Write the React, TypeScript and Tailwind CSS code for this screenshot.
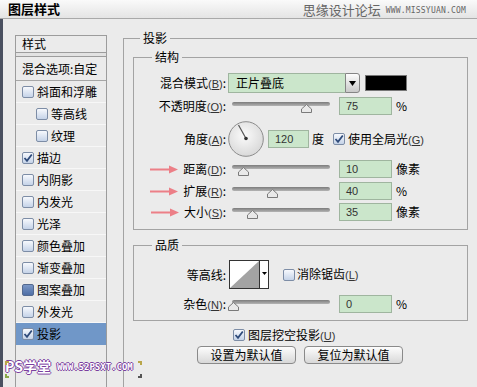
import React from 'react';

const Check = ({ checked, dark }: { checked?: boolean; dark?: boolean }) => (
  <span
    className={
      dark
        ? 'w-[12px] h-[12px] rounded-[2px] border border-[#53698f] bg-linear-to-b from-[#7b98c8] to-[#4e6ea5] flex items-center justify-center shrink-0'
        : 'w-[12px] h-[12px] rounded-[2px] border border-[#7d8da6] bg-linear-to-b from-[#f7f9fd] to-[#c5d3e8] flex items-center justify-center shrink-0'
    }
  >
    {checked && (
      <svg width="10" height="10" viewBox="0 0 10 10">
        <path d="M1.5 5 L4 7.8 L8.8 1.5" fill="none" stroke="#2f4b7a" strokeWidth="1.8" />
      </svg>
    )}
  </span>
);

const Key = ({ k }: { k: string }) => (
  <span className="font-['Liberation_Sans',sans-serif] text-[11px] text-[#333]">
    (<u>{k}</u>)
  </span>
);

const Slider = ({ pos }: { pos: number }) => (
  <div className="relative w-[98px] h-[18px] ml-[6px] shrink-0">
    <div className="absolute left-0 right-0 top-[5px] h-[4px] rounded-full bg-linear-to-b from-[#7c7c7c] to-[#b4b4b4]" />
    <svg className="absolute top-[7px]" style={{ left: pos - 5 }} width="11" height="9" viewBox="0 0 11 9">
      <path d="M5.5 0.5 L10.5 5 L10.5 8.5 L0.5 8.5 L0.5 5 Z" fill="#e9e9e9" stroke="#7a7a7a" />
    </svg>
  </div>
);

const Field = ({ v, w = 'w-[53px]' }: { v: string; w?: string }) => (
  <div
    className={`${w} h-[18px] shrink-0 bg-[#cbe6cb] border border-[#9fb59f] pl-[6px] flex items-center font-['Liberation_Sans',sans-serif] text-[11px] text-[#333]`}
  >
    {v}
  </div>
);

const Arrow = () => (
  <svg width="28" height="9" viewBox="0 0 28 9" className="shrink-0">
    <line x1="0" y1="4.5" x2="21" y2="4.5" stroke="#ec7f87" strokeWidth="2" />
    <polygon points="19,0.5 28,4.5 19,8.5" fill="#ec7f87" />
  </svg>
);

const Label = ({ children, arrow }: { children: React.ReactNode; arrow?: boolean }) => (
  <div className="w-[92px] shrink-0 flex items-center justify-end gap-[5px] text-[12px]">
    {arrow && <Arrow />}
    <span>{children}</span>
  </div>
);

const SliderRow = ({
  label,
  k,
  pos,
  v,
  unit,
  arrow,
  mt,
}: {
  label: string;
  k: string;
  pos: number;
  v: string;
  unit: string;
  arrow?: boolean;
  mt: string;
}) => (
  <div className={`${mt} h-[18px] flex items-center`}>
    <Label arrow={arrow}>
      {label}
      <Key k={k} />:
    </Label>
    <Slider pos={pos} />
    <div className="ml-[9px]">
      <Field v={v} />
    </div>
    <span className="ml-[4px] text-[12px]">{unit}</span>
  </div>
);

const styles = [
  { t: '斜面和浮雕' },
  { t: '等高线', indent: true },
  { t: '纹理', indent: true },
  { t: '描边', checked: true },
  { t: '内阴影' },
  { t: '内发光' },
  { t: '光泽' },
  { t: '颜色叠加' },
  { t: '渐变叠加' },
  { t: '图案叠加', dark: true },
  { t: '外发光' },
  { t: '投影', checked: true, selected: true },
];

export default function App() {
  return (
    <div className="relative w-[477px] h-[387px] overflow-hidden bg-[#ebebeb] flex flex-col text-black font-['Noto_Sans_CJK_SC',sans-serif] text-[12px]">
      {/* title bar */}
      <div className="h-[19px] shrink-0 flex items-end bg-linear-to-b from-[#fafafa] to-[#e4e4e4] border-b border-[#a9a9a9]">
        <span className="ml-[8px] mb-[1px] text-[13px] leading-[17px] font-bold">图层样式</span>
        <div className="ml-auto mr-[11px] flex items-end gap-[5px] text-[#666]">
          <span className="text-[13px] leading-[17px]">思缘设计论坛</span>
          <span className="mb-[2px] font-['DejaVu_Sans_Mono',monospace] text-[8px] leading-[10px] tracking-[0.2px]">WWW.MISSYUAN.COM</span>
        </div>
      </div>

      <div className="flex-1 flex min-h-0">
        <div className="w-[3px] shrink-0 bg-[#4a5060]" />

        {/* style list */}
        <div className="ml-[12px] mt-[16px] w-[92px] h-[360px] shrink-0 border border-[#9c9c9c] flex flex-col">
          <div className="h-[17px] pl-[6px] flex items-center border-b border-[#9c9c9c]">样式</div>
          <div className="h-[4px] border-b border-[#9c9c9c] bg-[#e2e2e2]" />
          <div className="h-[24px] pl-[6px] flex items-center border-b border-[#a6a6a6]">混合选项:自定</div>
          {styles.map((s) => (
            <div
              key={s.t}
              className={`h-[22px] flex items-center gap-[3px] border-b ${s.indent ? 'pl-[20px]' : 'pl-[6px]'} ${
                s.selected ? 'bg-[#7097c8] border-[#7097c8]' : 'border-[#f7f7f7]'
              }`}
            >
              <Check checked={s.checked} dark={s.dark} />
              <span>{s.t}</span>
            </div>
          ))}
        </div>

        {/* drop shadow panel */}
        <fieldset className="ml-[16px] mt-[11px] w-[360px] h-[400px] shrink-0 border-l border-t border-[#a3a3a3]">
          <legend className="ml-[16px] px-[3px] leading-[16px]">投影</legend>

          <fieldset className="ml-[9px] mt-[3px] w-[335px] border border-[#a3a3a3] pb-[8px]">
            <legend className="ml-[18px] px-[3px] leading-[16px]">结构</legend>

            <div className="mt-[8px] h-[20px] flex items-center">
              <Label>
                混合模式<Key k="B" />:
              </Label>
              <div className="ml-[2px] w-[132px] h-[20px] flex">
                <div className="flex-1 bg-[#cbe6cb] border border-[#9fb59f] border-r-0 pl-[7px] flex items-center">正片叠底</div>
                <div className="w-[15px] rounded-r-[3px] border border-[#858585] bg-linear-to-b from-[#fdfdfd] to-[#c9c9c9] flex items-center justify-center">
                  <svg width="7" height="5" viewBox="0 0 7 5">
                    <polygon points="0,0 7,0 3.5,5" fill="#000" />
                  </svg>
                </div>
              </div>
              <div className="ml-[5px] w-[42px] h-[16px] bg-black border border-[#777]" />
            </div>

            <SliderRow mt="mt-[4px]" label="不透明度" k="O" pos={74} v="75" unit="%" />

            <div className="mt-[6px] h-[36px] flex items-center">
              <Label>
                角度<Key k="A" />:
              </Label>
              <svg className="ml-[2px] shrink-0" width="36" height="36" viewBox="0 0 36 36">
                <defs>
                  <radialGradient id="dial" cx="0.45" cy="0.4" r="0.65">
                    <stop offset="0" stopColor="#fbfbfb" />
                    <stop offset="1" stopColor="#d6d6d6" />
                  </radialGradient>
                </defs>
                <circle cx="18" cy="18" r="17.3" fill="url(#dial)" stroke="#8c8c8c" />
                <line x1="18" y1="17.5" x2="10.5" y2="4" stroke="#555" strokeWidth="1.2" />
                <circle cx="18" cy="17.5" r="1.8" fill="#333" />
              </svg>
              <div className="ml-[4px]">
                <Field v="120" w="w-[41px]" />
              </div>
              <span className="ml-[3px]">度</span>
              <div className="ml-[9px]">
                <Check checked />
              </div>
              <span className="ml-[3px]">
                使用全局光<Key k="G" />
              </span>
            </div>

            <SliderRow mt="mt-[3px]" label="距离" k="D" pos={11} v="10" unit="像素" arrow />
            <SliderRow mt="mt-[4px]" label="扩展" k="R" pos={40} v="40" unit="%" arrow />
            <SliderRow mt="mt-[3px]" label="大小" k="S" pos={20} v="35" unit="像素" arrow />
          </fieldset>

          <fieldset className="ml-[9px] mt-[7px] w-[335px] border border-[#a3a3a3] pb-[7px]">
            <legend className="ml-[18px] px-[3px] leading-[16px]">品质</legend>

            <div className="mt-[7px] h-[29px] flex items-center">
              <Label>等高线:</Label>
              <div className="ml-[3px] w-[40px] h-[29px] shrink-0 flex border border-[#333] bg-white">
                <svg width="29" height="27" viewBox="0 0 29 27">
                  <polygon points="0,27 29,0 29,27" fill="#a3a3a3" />
                </svg>
                <div className="flex-1 border-l border-[#333] flex justify-center pt-[11px]">
                  <svg width="5" height="3" viewBox="0 0 5 3">
                    <polygon points="0,0 5,0 2.5,3" fill="#000" />
                  </svg>
                </div>
              </div>
              <div className="ml-[14px]">
                <Check />
              </div>
              <span className="ml-[2px]">
                消除锯齿<Key k="L" />
              </span>
            </div>

            <SliderRow mt="mt-[6px]" label="杂色" k="N" pos={1} v="0" unit="%" />
          </fieldset>

          <div className="mt-[7px] ml-[109px] h-[14px] flex items-center gap-[3px]">
            <Check checked />
            <span>
              图层挖空投影<Key k="U" />
            </span>
          </div>

          <div className="mt-[4px] ml-[73px] flex gap-[8px]">
            <button className="w-[99px] h-[18px] rounded-[4px] border border-[#8a8a8a] bg-linear-to-b from-[#fdfdfd] to-[#d8d8d8] text-[12px] leading-[16px]">
              设置为默认值
            </button>
            <button className="w-[99px] h-[18px] rounded-[4px] border border-[#8a8a8a] bg-linear-to-b from-[#fdfdfd] to-[#d8d8d8] text-[12px] leading-[16px]">
              复位为默认值
            </button>
          </div>
        </fieldset>
      </div>

      {/* bottom-left watermark */}
      <div className="absolute left-[5px] top-[358px] flex items-end gap-[6px]">
        <span className="text-[14px] leading-[16px] font-bold text-white [text-shadow:1px_0_#7b3f9f,-1px_0_#7b3f9f,0_1px_#7b3f9f,0_-1px_#7b3f9f]">
          PS学堂
        </span>
        <span className="mb-[2px] font-['DejaVu_Sans_Mono',monospace] font-bold text-[9px] leading-[10px] text-white [text-shadow:1px_0_#7b3f9f,-1px_0_#7b3f9f,0_1px_#7b3f9f,0_-1px_#7b3f9f]">
          WWW.52PSXT.COM
        </span>
      </div>
      <div className="absolute left-[5px] top-[361px] w-[4px] h-[4px] border-l-2 border-t-2 border-[#b9a64a]" />
      <div className="absolute left-[5px] top-[374px] w-[4px] h-[4px] border-l-2 border-b-2 border-[#8aa84a]" />
      <div className="absolute left-[138px] top-[361px] w-[4px] h-[4px] border-r-2 border-t-2 border-[#b9a64a]" />
      <div className="absolute left-[138px] top-[374px] w-[4px] h-[4px] border-r-2 border-b-2 border-[#555]" />
    </div>
  );
}
